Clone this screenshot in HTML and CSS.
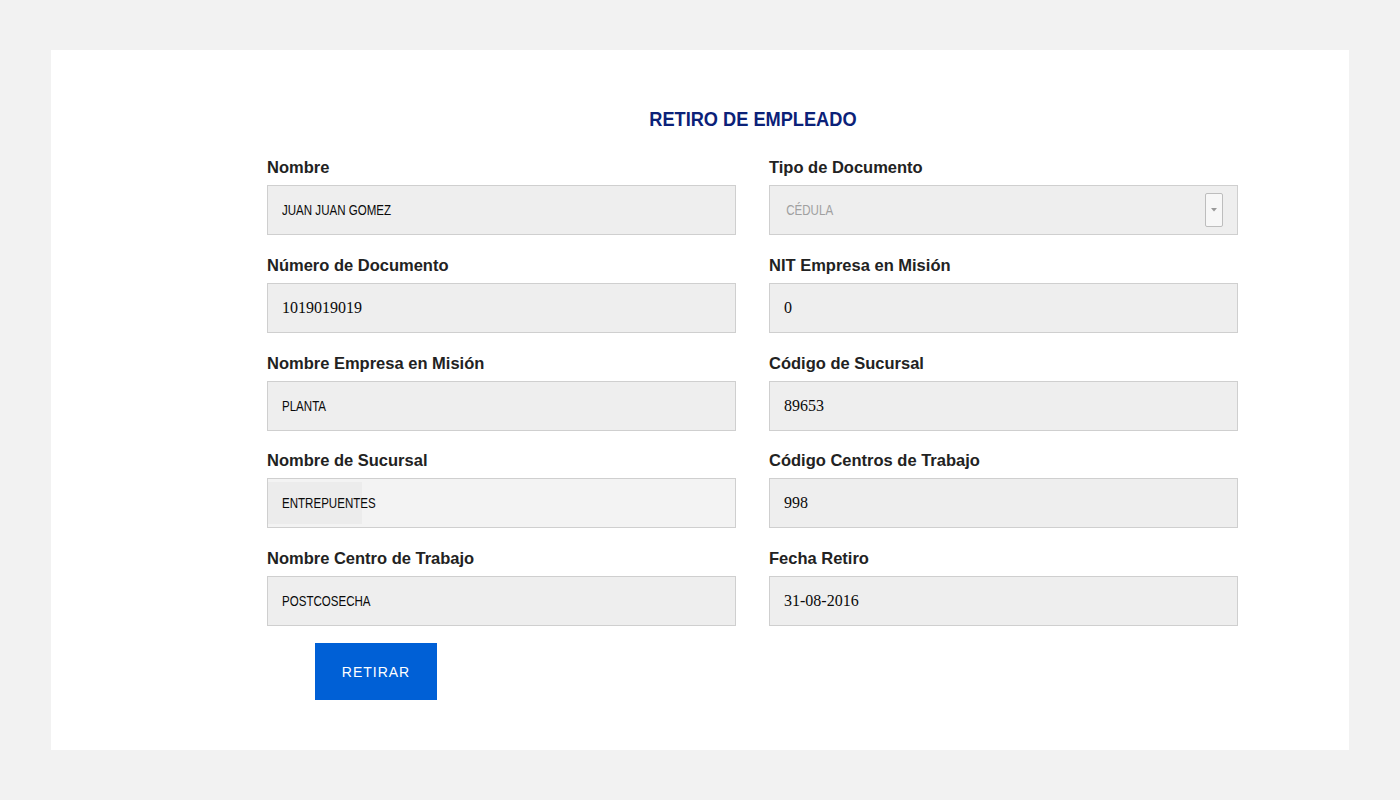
FILE: index.html
```html
<!DOCTYPE html>
<html lang="es">
<head>
<meta charset="utf-8">
<title>Retiro de Empleado</title>
<link rel="stylesheet" href="styles.css">
</head>
<body>
<main class="card">
  <section class="form">
    <h1 class="title"><span class="narrow-title">RETIRO DE EMPLEADO</span></h1>
    <div class="grid">
      <div class="field">
        <label class="label">Nombre</label>
        <div class="input"><span class="cond">JUAN JUAN GOMEZ</span></div>
      </div>
      <div class="field">
        <label class="label">Tipo de Documento</label>
        <div class="input select">
          <span class="cond muted">CÉDULA</span>
          <span class="arrow"><svg width="6" height="4" viewBox="0 0 6 4"><path d="M0 0h6L3 3.5z" fill="#999"/></svg></span>
        </div>
      </div>
      <div class="field">
        <label class="label">Número de Documento</label>
        <div class="input serif">1019019019</div>
      </div>
      <div class="field">
        <label class="label">NIT Empresa en Misión</label>
        <div class="input serif">0</div>
      </div>
      <div class="field">
        <label class="label">Nombre Empresa en Misión</label>
        <div class="input"><span class="cond">PLANTA</span></div>
      </div>
      <div class="field">
        <label class="label">Código de Sucursal</label>
        <div class="input serif">89653</div>
      </div>
      <div class="field">
        <label class="label">Nombre de Sucursal</label>
        <div class="input light"><span class="auto"><span class="cond">ENTREPUENTES</span></span></div>
      </div>
      <div class="field">
        <label class="label">Código Centros de Trabajo</label>
        <div class="input serif">998</div>
      </div>
      <div class="field">
        <label class="label">Nombre Centro de Trabajo</label>
        <div class="input"><span class="cond">POSTCOSECHA</span></div>
      </div>
      <div class="field">
        <label class="label">Fecha Retiro</label>
        <div class="input serif">31-08-2016</div>
      </div>
    </div>
    <button class="btn">RETIRAR</button>
  </section>
</main>
</body>
</html>
```
FILE: styles.css
```css
html, body {
  margin: 0;
  padding: 0;
  background: #f2f2f2;
}
body {
  padding: 50px 51px;
  font-family: "Liberation Sans", Arial, sans-serif;
}
.card {
  background: #ffffff;
  height: 700px;
  box-sizing: border-box;
  padding: 57px 0 0 216px;
}
.form {
  width: 971px;
}
.title {
  margin: 0 0 26px 0;
  text-align: center;
  font-family: "Liberation Sans", Arial, sans-serif;
  font-weight: bold;
  font-size: 20px;
  line-height: 24px;
  color: #0b2178;
}
.narrow-title {
  display: inline-block;
  transform: scaleX(0.91);
  transform-origin: center;
}
.grid {
  display: grid;
  grid-template-columns: 469px 469px;
  column-gap: 33px;
  row-gap: 19.75px;
}
.field {
  display: flex;
  flex-direction: column;
}
.label {
  font-family: "Liberation Sans", Arial, sans-serif;
  font-weight: bold;
  font-size: 16.5px;
  line-height: 20px;
  color: #222222;
  margin-bottom: 8px;
}
.input {
  height: 50px;
  box-sizing: border-box;
  background: #eeeeee;
  border: 1px solid #cfcfcf;
  padding: 0 14px;
  display: flex;
  align-items: center;
  color: #0a0a0a;
}
.cond {
  display: inline-block;
  font-family: "Liberation Sans", Arial, sans-serif;
  font-size: 15.5px;
  transform: scaleX(0.745);
  transform-origin: left center;
  white-space: nowrap;
}
.serif {
  font-family: "Liberation Serif", "Times New Roman", serif;
  font-size: 16px;
}
.light {
  background: #f3f3f3;
}
.auto {
  background: #ececec;
  height: 42px;
  width: 94px;
  margin-left: -14px;
  padding-left: 14px;
  box-sizing: border-box;
  display: flex;
  align-items: center;
}
.select {
  justify-content: space-between;
  padding-right: 14px;
}
.muted {
  color: #a0a0a0;
  padding-left: 3px;
}
.arrow {
  width: 18px;
  height: 34px;
  box-sizing: border-box;
  border: 1px solid #bdbdbd;
  border-radius: 2px;
  background: #f7f7f7;
  display: flex;
  align-items: center;
  justify-content: center;
}
.arrow svg {
  display: block;
}
.btn {
  margin: 17px 0 0 48px;
  width: 122px;
  height: 57px;
  border: none;
  background: #0060d6;
  color: #ffffff;
  font-family: "Liberation Sans", Arial, sans-serif;
  font-size: 14px;
  letter-spacing: 1px;
  padding: 0;
  cursor: pointer;
}
```
